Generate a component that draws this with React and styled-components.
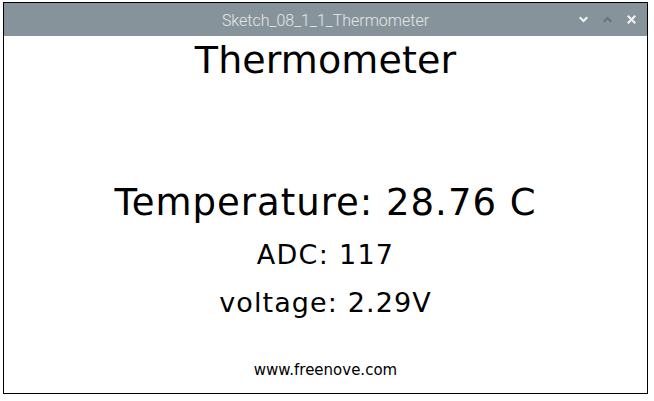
import React from 'react';
import styled, { createGlobalStyle } from 'styled-components';

const GlobalStyle = createGlobalStyle`
  html, body {
    margin: 0;
    padding: 0;
    background: #ffffff;
  }
`;

const Window = styled.div`
  box-sizing: border-box;
  width: 645px;
  height: 392px;
  margin: 2px 0 0 3px;
  border: 1px solid #000000;
  display: flex;
  flex-direction: column;
  background: #ffffff;
`;

const TitleBar = styled.div`
  position: relative;
  height: 33px;
  flex-shrink: 0;
  background: #87939a;
  display: flex;
  align-items: center;
  justify-content: center;
`;

const TitleText = styled.span`
  font-family: Roboto, 'Liberation Sans', sans-serif;
  font-weight: 300;
  font-size: 16px;
  color: #e3e7e9;
  margin-top: 1px;
`;

const Controls = styled.div`
  position: absolute;
  right: 11px;
  top: 0;
  height: 100%;
  display: flex;
  align-items: center;
  gap: 15px;
`;

const ControlButton = styled.svg`
  width: 9px;
  height: 9px;
  stroke: ${({ $dim }) => ($dim ? '#69747a' : '#eef1f2')};
  stroke-width: 2.2;
  fill: none;
  stroke-linecap: square;
`;

const Canvas = styled.main`
  flex: 1;
  display: flex;
  flex-direction: column;
  align-items: center;
  font-family: 'DejaVu Sans', 'Liberation Sans', sans-serif;
  color: #000000;
`;

const Line = styled.div`
  font-size: ${({ $size }) => $size}px;
  line-height: ${({ $size }) => $size}px;
  letter-spacing: ${({ $spacing }) => $spacing || 0}px;
  margin-top: ${({ $top }) => $top}px;
  white-space: nowrap;
`;

const Footer = styled.div`
  font-family: 'DejaVu Sans', 'Liberation Sans', sans-serif;
  font-size: 15px;
  line-height: 15px;
  margin-top: 46.8px;
  color: #000000;
`;

const App = () => (
  <>
    <GlobalStyle />
    <Window>
      <TitleBar>
        <TitleText>Sketch_08_1_1_Thermometer</TitleText>
        <Controls>
          <ControlButton viewBox="0 0 9 9">
            <polyline points="1.5,3 4.5,6 7.5,3" />
          </ControlButton>
          <ControlButton viewBox="0 0 9 9" $dim>
            <polyline points="1.5,6 4.5,3 7.5,6" />
          </ControlButton>
          <ControlButton viewBox="0 0 9 9">
            <line x1="1.5" y1="1.5" x2="7.5" y2="7.5" />
            <line x1="7.5" y1="1.5" x2="1.5" y2="7.5" />
          </ControlButton>
        </Controls>
      </TitleBar>
      <Canvas>
        <Line $size={38} $spacing={0.1} $top={4.9}>Thermometer</Line>
        <Line $size={37} $spacing={1} $top={105}>Temperature: 28.76 C</Line>
        <Line $size={27} $spacing={1.3} $top={20.5}>ADC: 117</Line>
        <Line $size={27} $spacing={1.1} $top={21}>voltage: 2.29V</Line>
        <Footer>www.freenove.com</Footer>
      </Canvas>
    </Window>
  </>
);

export default App;
